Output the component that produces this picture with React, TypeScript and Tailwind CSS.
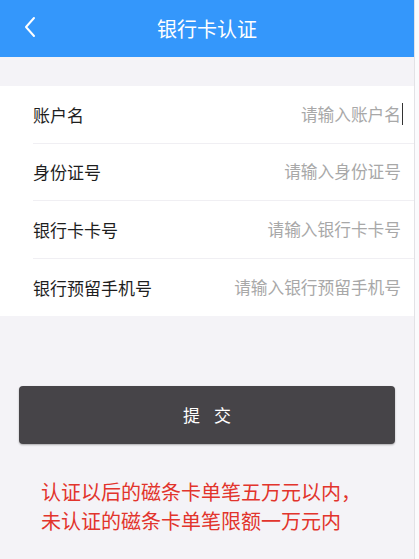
import { useState } from "react";

const fields = [
  { label: "账户名", placeholder: "请输入账户名" },
  { label: "身份证号", placeholder: "请输入身份证号" },
  { label: "银行卡卡号", placeholder: "请输入银行卡卡号" },
  { label: "银行预留手机号", placeholder: "请输入银行预留手机号" },
];

export default function App() {
  const [values, setValues] = useState<string[]>(["", "", "", ""]);

  return (
    <div
      className="flex h-[559px] w-[419px] overflow-hidden bg-[#f4f3f7]"
      style={{ fontFamily: '"Noto Sans CJK SC", "Noto Sans", sans-serif' }}
    >
      <div className="flex w-[414px] flex-col">
        <header className="relative flex h-[57px] items-center justify-center bg-[#3497fb]">
          <button className="absolute left-[22px] top-[15px] text-white">
            <svg width="16" height="24" viewBox="0 0 16 24" fill="none">
              <path d="M12 3 L4 12 L12 21" stroke="white" strokeWidth="2" strokeLinecap="round" strokeLinejoin="round" />
            </svg>
          </button>
          <h1 className="text-[20px] font-normal text-white">银行卡认证</h1>
        </header>

        <div className="h-[29px]" />

        <div className="bg-white">
          {fields.map((f, i) => (
            <div key={f.label} className="pl-[33px]">
              <div
                className={`flex h-[57.5px] items-center justify-between pr-[11px] ${
                  i < fields.length - 1 ? "border-b border-[#f0eff3]" : ""
                }`}
              >
                <label className="shrink-0 text-[17px] text-[#1e1e1e]">{f.label}</label>
                <div className="flex items-center">
                  <input
                    value={values[i]}
                    onChange={(e) => {
                      const next = [...values];
                      next[i] = e.target.value;
                      setValues(next);
                    }}
                    placeholder={f.placeholder}
                    className="w-[200px] bg-transparent text-right text-[16.7px] text-[#333] placeholder:text-[#a8a8a8] focus:outline-none"
                  />
                  <span className={`ml-[1px] h-[22px] w-[1px] ${i === 0 ? "bg-[#333]" : "bg-transparent"}`} />
                </div>
              </div>
            </div>
          ))}
        </div>

        <div className="px-[19px] pt-[70px]">
          <button className="h-[58px] w-full rounded-[4px] bg-[#464448] text-[17px] tracking-[14px] text-white shadow-[0_1px_2px_rgba(0,0,0,0.3)]">
            <span className="pl-[14px]">提交</span>
          </button>
        </div>

        <div className="flex flex-col gap-[1px] pl-[41px] pt-[34px] text-[20px] leading-[28px] text-[#e2342c]">
          <p>认证以后的磁条卡单笔五万元以内，</p>
          <p>未认证的磁条卡单笔限额一万元内</p>
        </div>
      </div>
      <div className="w-[5px] border-l border-[#e2e2e6] bg-[#fbfbfd]" />
    </div>
  );
}
